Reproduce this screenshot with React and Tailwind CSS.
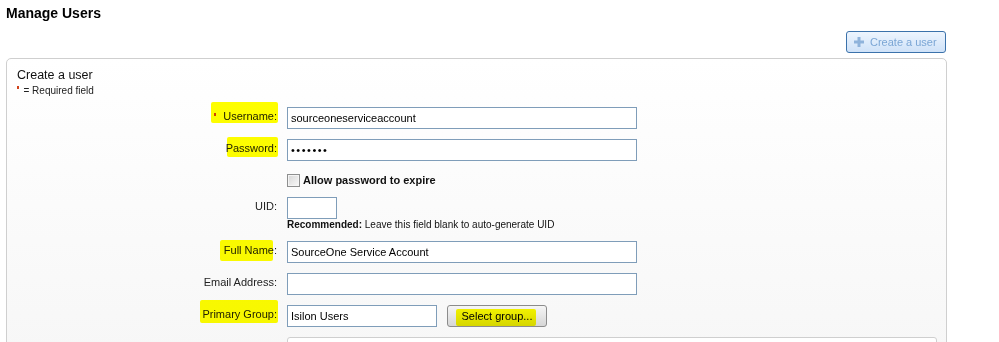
import React from "react";

function Mark({ className, children }) {
  return (
    <span className="relative inline-block">
      {children}
      <span className={"absolute bg-[#ffff00] mix-blend-multiply rounded-[2px] " + className} />
    </span>
  );
}

function Row({ label, children, className }) {
  return (
    <div className={"flex items-start " + className}>
      <div className="w-[260px] shrink-0 text-right text-[11px] leading-[13px] pt-[2.5px] text-[#222]">
        {label}
      </div>
      <div className="ml-[10px]">{children}</div>
    </div>
  );
}

function Field({ value, w, className = "" }) {
  return (
    <input
      readOnly
      value={value}
      className={
        "block box-border h-[22px] border border-[#7f9db9] bg-white px-[3px] text-[11px] text-black outline-none font-['Liberation_Sans',Arial,sans-serif] " +
        w +
        " " +
        className
      }
    />
  );
}

export default function App() {
  return (
    <div className="min-h-[342px] bg-white font-['Liberation_Sans',Arial,sans-serif] text-[#222] px-[6px] pt-[5px]">
      <h1 className="text-[14px] leading-[16px] font-bold text-black">Manage Users</h1>

      <div className="w-[941px] flex justify-end mt-[10px]">
        <button className="h-[22px] w-[100px] mr-[1px] flex items-center border border-[#3b72ab] rounded-[3px] bg-linear-to-b from-[#edf5fe] to-[#cfe2f8] text-[#7ba6d5] text-[11px] pl-[7px]">
          <svg width="10" height="10" viewBox="0 0 10 10" className="shrink-0">
            <rect x="0" y="3.5" width="10" height="3" fill="#8fb3db" />
            <rect x="3.5" y="0" width="3" height="10" fill="#8fb3db" />
          </svg>
          <span className="ml-[6px]">Create a user</span>
        </button>
      </div>

      <div className="mt-[5px] w-[941px] border border-[#cfcfcf] rounded-[5px] bg-linear-to-b from-white to-[#f6f6f6] px-[10px] pt-[9px] pb-[20px]">
        <div className="text-[12.5px] leading-[15px] text-[#111]">Create a user</div>
        <div className="mt-[2px] text-[10px] leading-[12px] text-[#222]">
          <span className="inline-block w-[2px] h-[3px] bg-[#d1421a] align-top mt-[1px] mr-[4.5px]" />= Required field
        </div>

        <Row
          className="mt-[10px]"
          label={
            <Mark className="top-[-8px] bottom-[0px] left-[-3px] right-[-1px]">
              <span className="inline-block w-[2px] h-[3px] bg-[#d1421a] align-top mt-[3.5px] mr-[7px]" />
              Username:
            </Mark>
          }
        >
          <Field value="sourceoneserviceaccount" w="w-[350px]" />
        </Row>

        <Row
          className="mt-[10px]"
          label={<Mark className="top-[-4.5px] bottom-[-2.5px] left-[1px] right-[-1px]">Password:</Mark>}
        >
          <Field value="•••••••" w="w-[350px]" className="tracking-[1.5px]" />
        </Row>

        <div className="mt-[13px] ml-[270px] flex items-center h-[13px]">
          <span className="inline-block w-[13px] h-[13px] border border-[#8e8f8f] bg-linear-to-br from-[#d6d6d6] to-[#f9f9f9] shadow-[inset_0_0_0_1px_#f4f4f4]" />
          <span className="ml-[3px] text-[11px] font-bold text-[#111] leading-[13px]">Allow password to expire</span>
        </div>

        <Row className="mt-[10px]" label="UID:">
          <Field value="" w="w-[50px]" />
          <div className="text-[10px] leading-[12px] text-[#111] whitespace-nowrap">
            <span className="font-bold">Recommended:</span> Leave this field blank to auto-generate UID
          </div>
        </Row>

        <Row
          className="mt-[10px]"
          label={<Mark className="top-[-3.5px] bottom-[-4.5px] left-[-4px] right-[4px]">Full Name:</Mark>}
        >
          <Field value="SourceOne Service Account" w="w-[350px]" />
        </Row>

        <Row className="mt-[10px]" label="Email Address:">
          <Field value="" w="w-[350px]" />
        </Row>

        <Row
          className="mt-[10px]"
          label={<Mark className="top-[-7.5px] bottom-[-2.5px] left-[-2px] right-[-1px]">Primary Group:</Mark>}
        >
          <div className="flex items-start">
            <Field value="Isilon Users" w="w-[150px]" />
            <button className="relative ml-[10px] h-[22px] w-[100px] border border-[#8c8c8c] rounded-[3px] bg-linear-to-b from-[#f6f6f6] to-[#d6d6d6] text-[11px] text-black">
              Select group...
              <span className="absolute top-[3px] bottom-[0px] left-[8px] right-[10px] bg-[#ffff00] mix-blend-multiply rounded-[2px]" />
            </button>
          </div>
        </Row>

        <div className="mt-[10px] ml-[270px] w-[650px] h-[30px] border border-[#cfcfcf] rounded-[3px] bg-white" />
      </div>
    </div>
  );
}
